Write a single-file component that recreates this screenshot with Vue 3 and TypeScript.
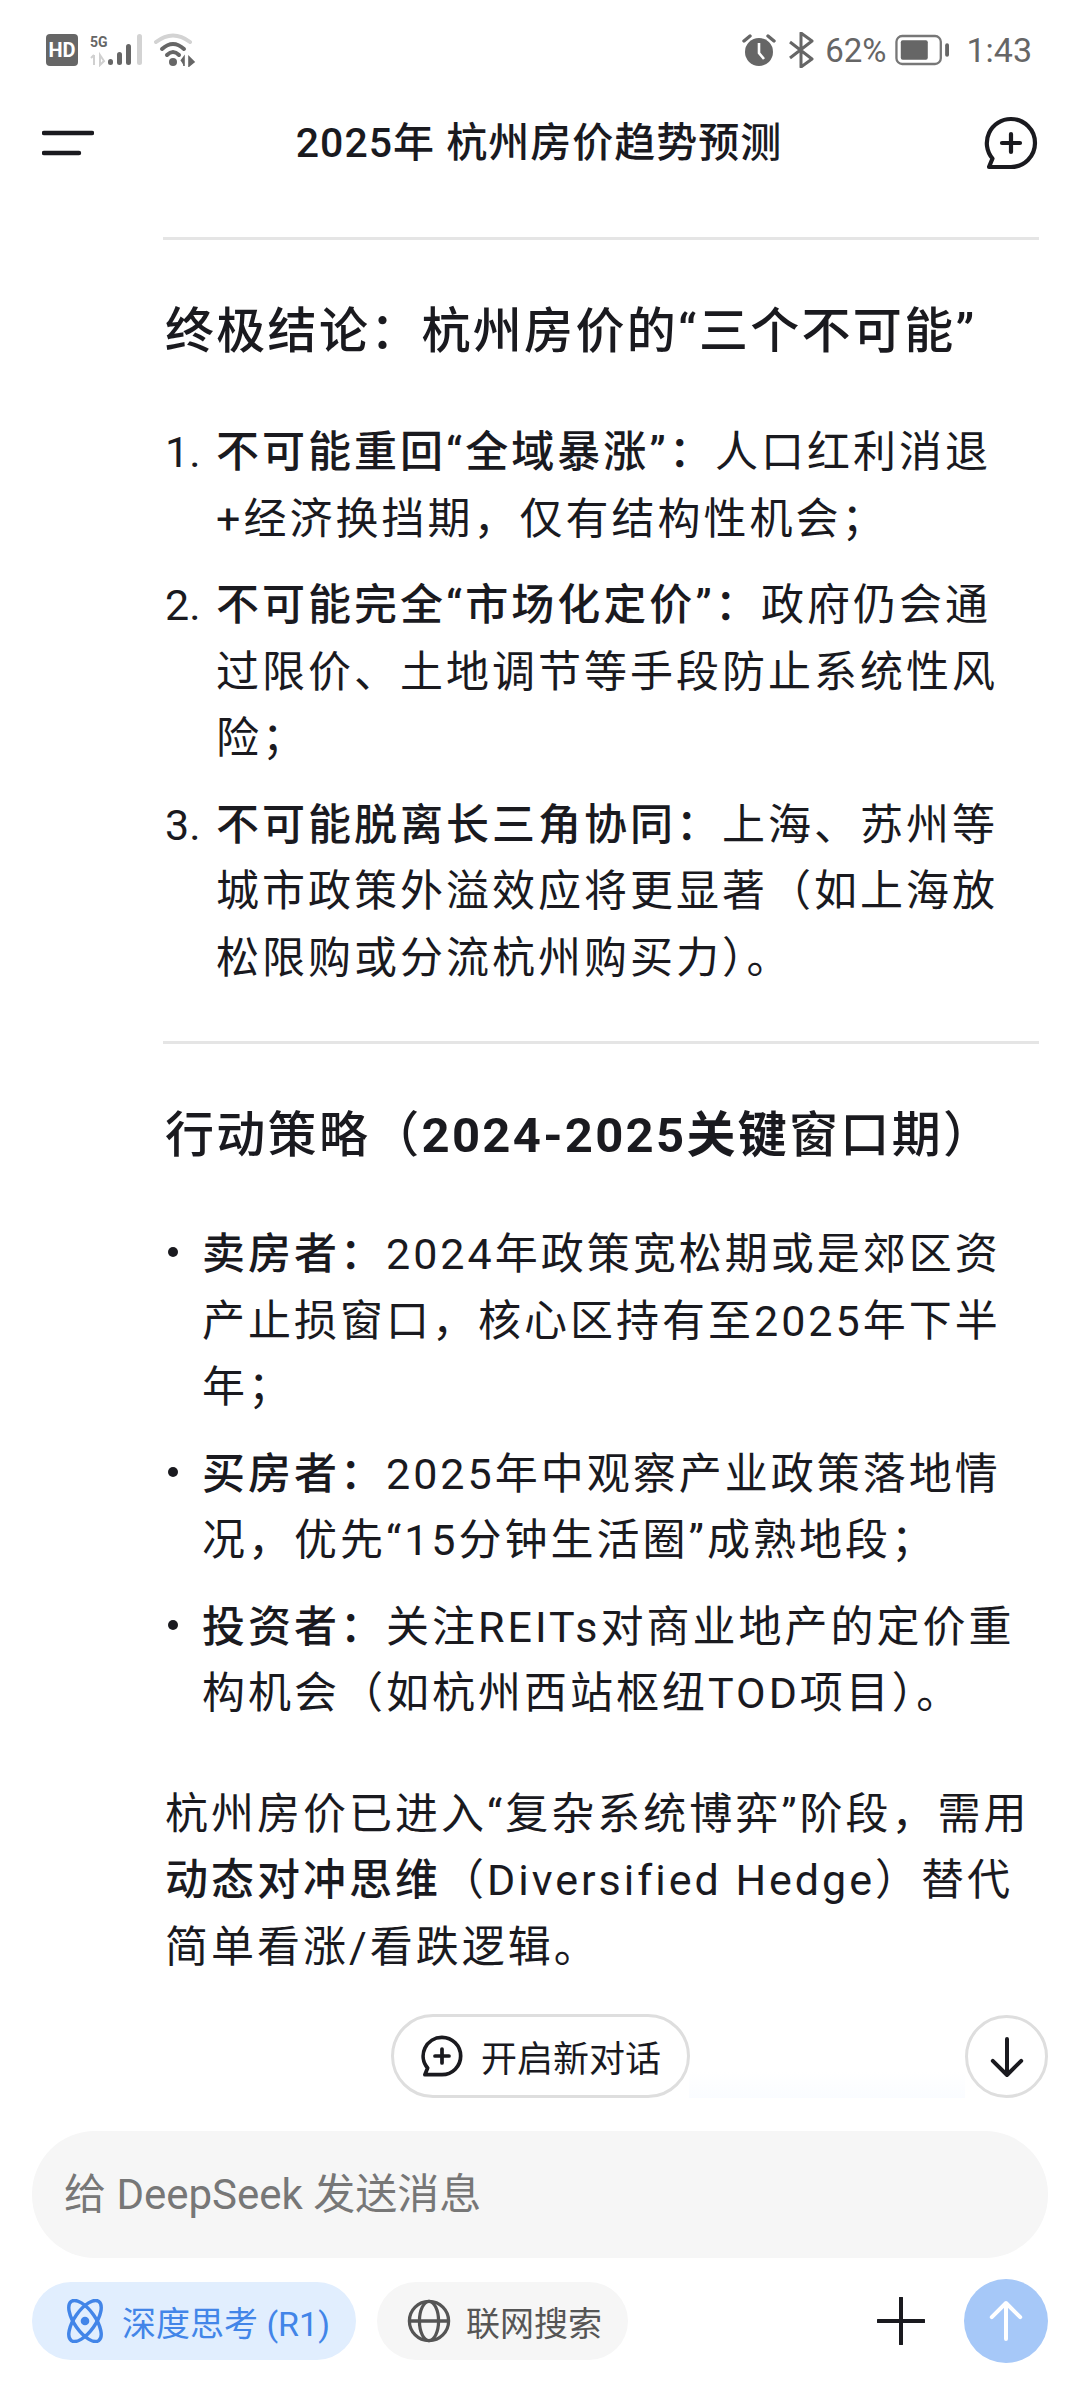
<script setup lang="ts">
interface Part {
  text: string
  bold?: boolean
}

const numbered: Part[][] = [
  [{ text: '不可能重回“全域暴涨”：', bold: true }, { text: '人口红利消退\n+经济换挡期，仅有结构性机会；' }],
  [{ text: '不可能完全“市场化定价”：', bold: true }, { text: '政府仍会通过限价、土地调节等手段防止系统性风险；' }],
  [{ text: '不可能脱离长三角协同：', bold: true }, { text: '上海、苏州等城市政策外溢效应将更显著（如上海放松限购或分流杭州购买力）。' }],
]

const bullets: Part[][] = [
  [{ text: '卖房者：', bold: true }, { text: '2024年政策宽松期或是郊区资产止损窗口，核心区持有至2025年下半年；' }],
  [{ text: '买房者：', bold: true }, { text: '2025年中观察产业政策落地情况，优先“15分钟生活圈”成熟地段；' }],
  [{ text: '投资者：', bold: true }, { text: '关注REITs对商业地产的定价重构机会（如杭州西站枢纽TOD项目）。' }],
]
</script>

<template>
  <div class="phone">
    <div class="status-bar">
      <div class="status-left">
        <span class="hd">HD</span>
        <svg class="signal" width="56" height="34" viewBox="0 0 56 34">
          <text x="0" y="14" class="net">5G</text>
          <path d="M4 22v10M1 25l3-3M10 22v10l4-4z" stroke="#d0d0d0" stroke-width="2" fill="none" />
          <g fill="#666">
            <rect x="18" y="26" width="5" height="6" rx="2.5" />
            <rect x="27" y="19" width="5" height="13" rx="2.5" />
            <rect x="36" y="11" width="5" height="21" rx="2.5" />
          </g>
          <rect x="47" y="1" width="5" height="31" rx="2.5" fill="#d3d3d3" />
        </svg>
        <svg class="wifi" width="42" height="34" viewBox="0 0 42 34">
          <path d="M2 9Q19 -4 36 9" stroke="#d3d3d3" stroke-width="4" fill="none" stroke-linecap="round" />
          <path d="M8 16Q19 6 30 16M13 22Q19 16 25 22" stroke="#666" stroke-width="4" fill="none" stroke-linecap="round" />
          <circle cx="19" cy="29" r="4" fill="#666" />
          <path d="M30 33v-9l-3 4M35 24v9l5-4z" stroke="#666" stroke-width="1.6" fill="#666" />
        </svg>
      </div>
      <div class="status-right">
        <svg class="alarm" width="34" height="34" viewBox="0 0 34 34">
          <circle cx="17" cy="19" r="14" fill="#666" />
          <path d="M17 10v10l5 6" stroke="#fff" stroke-width="2.6" fill="none" />
          <path d="M2 8l6-5M32 8l-6-5" stroke="#666" stroke-width="3.4" stroke-linecap="round" />
        </svg>
        <svg class="bt" width="28" height="36" viewBox="0 0 28 36">
          <path d="M3 10l22 17-11 8V1l11 8L3 26" stroke="#666" stroke-width="3" fill="none" stroke-linejoin="round" />
        </svg>
        <span class="pct">62%</span>
        <svg class="battery" width="54" height="32" viewBox="0 0 56 32">
          <rect x="1.5" y="1.5" width="46" height="29" rx="6" fill="none" stroke="#777" stroke-width="2.4" />
          <rect x="6" y="6" width="28" height="20" rx="2" fill="#666" />
          <rect x="52" y="9" width="4" height="14" rx="2" fill="#666" />
        </svg>
        <span class="time">1:43</span>
      </div>
    </div>

    <header class="top-bar">
      <svg width="52" height="26" viewBox="0 0 52 26">
        <path d="M2 3h48M2 23h35" stroke="#1a1a1f" stroke-width="4.4" stroke-linecap="round" />
      </svg>
      <h1 class="chat-title">2025年 杭州房价趋势预测</h1>
      <svg width="54" height="54" viewBox="0 0 54 54">
        <path d="M27 3a24 24 0 1 1 0 48H5l3.500-8.500A24 24 0 0 1 27 3z" fill="none" stroke="#1a1a1f" stroke-width="4.200" stroke-linejoin="round" />
        <path d="M27 18v18M18 27h18" stroke="#1a1a1f" stroke-width="4.200" stroke-linecap="round" />
      </svg>
    </header>

    <main class="chat-body">
      <hr class="rule" />
      <h2 class="section-title">终极结论：杭州房价的“三个不可能”</h2>
      <ol class="num-list">
        <li v-for="(item, i) in numbered" :key="i" class="num-item">
          <span class="marker">{{ i + 1 }}.</span>
          <p class="item-text">
            <template v-for="(part, j) in item" :key="j">
              <strong v-if="part.bold">{{ part.text }}</strong>
              <template v-else>{{ part.text }}</template>
            </template>
          </p>
        </li>
      </ol>
      <hr class="rule second" />
      <h2 class="section-title">行动策略（<b class="heavy">2024-2025关键</b>窗口期）</h2>
      <ul class="bullet-list">
        <li v-for="(item, i) in bullets" :key="i" class="bullet-item">
          <span class="dot"></span>
          <p class="item-text">
            <template v-for="(part, j) in item" :key="j">
              <strong v-if="part.bold">{{ part.text }}</strong>
              <template v-else>{{ part.text }}</template>
            </template>
          </p>
        </li>
      </ul>
      <p class="summary">杭州房价已进入“复杂系统博弈”阶段，需用<strong>动态对冲思维</strong>（Diversified Hedge）替代简单看涨/看跌逻辑。</p>
    </main>

    <div class="fade"></div>
    <button class="new-chat">
      <svg width="42" height="42" viewBox="0 0 54 54">
        <path d="M27 3a24 24 0 1 1 0 48H5l3.500-8.500A24 24 0 0 1 27 3z" fill="none" stroke="#1a1a1f" stroke-width="4.800" stroke-linejoin="round" />
        <path d="M27 18v18M18 27h18" stroke="#1a1a1f" stroke-width="4.800" stroke-linecap="round" />
      </svg>
      开启新对话
    </button>
    <button class="scroll-down">
      <svg width="36" height="42" viewBox="0 0 38 44">
        <path d="M19 3v38M4 26l15 15 15-15" fill="none" stroke="#1a1a1f" stroke-width="4.200" stroke-linecap="round" stroke-linejoin="round" />
      </svg>
    </button>

    <div class="composer">
      <div class="input-box">给 DeepSeek 发送消息</div>
      <div class="tools">
        <button class="chip active">
          <svg width="44" height="44" viewBox="0 0 46 46">
            <g fill="none" stroke="#4285e8" stroke-width="3.600">
              <ellipse cx="23" cy="23" rx="11" ry="25" transform="rotate(-35 23 23)" />
              <ellipse cx="23" cy="23" rx="11" ry="25" transform="rotate(35 23 23)" />
            </g>
            <circle cx="23" cy="23" r="4.500" fill="#4285e8" />
          </svg>
          深度思考 (R1)
        </button>
        <button class="chip">
          <svg width="44" height="44" viewBox="0 0 46 46">
            <g fill="none" stroke="#555" stroke-width="3.400">
              <circle cx="23" cy="23" r="20.500" />
              <ellipse cx="23" cy="23" rx="10" ry="20.500" />
              <path d="M3 23h40" />
            </g>
          </svg>
          联网搜索
        </button>
        <svg class="plus" width="48" height="48" viewBox="0 0 48 48">
          <path d="M24 1v46M1 24h46" stroke="#1a1a1f" stroke-width="4" stroke-linecap="round" />
        </svg>
        <button class="send">
          <svg width="36" height="42" viewBox="0 0 38 44">
            <path d="M19 41V3M4 18L19 3l15 15" fill="none" stroke="#fff" stroke-width="4.200" stroke-linecap="round" stroke-linejoin="round" />
          </svg>
        </button>
      </div>
    </div>
  </div>
</template>

<style>
html, body {
  margin: 0;
  background: #fff;
}
</style>

<style scoped>
.phone {
  position: relative;
  width: 1080px;
  height: 2400px;
  overflow: hidden;
  background: #fff;
  color: #1a1a1f;
  font-family: Roboto, "Noto Sans CJK SC", sans-serif;
  display: flex;
  flex-direction: column;
}

.status-bar {
  height: 98px;
  padding: 32px 48px 0 46px;
  box-sizing: border-box;
  display: flex;
  justify-content: space-between;
  align-items: flex-start;
  color: #666;
}

.status-left,
.status-right {
  display: flex;
  align-items: center;
  height: 36px;
}

.hd {
  width: 32px;
  height: 32px;
  border-radius: 4px;
  background: #666;
  color: #fff;
  font-size: 20px;
  font-weight: 700;
  line-height: 32px;
  text-align: center;
  margin-right: 12px;
}

.signal {
  margin-right: 8px;
}

.net {
  font-size: 14px;
  font-weight: 700;
  fill: #666;
}

.alarm {
  margin-right: 11px;
}

.bt {
  margin-right: 10px;
}

.pct {
  font-size: 33px;
  margin-right: 9px;
}

.battery {
  margin-right: 17px;
}

.time {
  font-size: 34px;
}

.top-bar {
  height: 90px;
  padding: 0 42px 0 42px;
  display: flex;
  align-items: center;
  justify-content: space-between;
}

.chat-title {
  margin: 0;
  font-size: 41px;
  font-weight: 500;
  letter-spacing: 1px;
  line-height: 60px;
}

.chat-body {
  padding: 49px 0 0 165px;
  width: 868px;
  box-sizing: content-box;
}

.rule {
  margin: 0 6px 0 -2px;
  border: none;
  height: 3px;
  background: #e5e5e5;
  width: 876px;
}

.rule.second {
  margin-top: 50px;
}

.section-title {
  margin: 57px 0 0;
  font-size: 49px;
  font-weight: 500;
  line-height: 70px;
  letter-spacing: 2.3px;
  white-space: nowrap;
}

.heavy {
  font-weight: 700;
}

.num-list,
.bullet-list {
  list-style: none;
  margin: 0;
  padding: 0;
}

.num-list {
  margin-top: 52px;
}

.bullet-list {
  margin-top: 50px;
}

.num-item,
.bullet-item {
  display: flex;
  margin-bottom: 20px;
  position: relative;
}

.marker {
  width: 51px;
  flex: none;
  font-size: 43px;
  line-height: 66.5px;
}

.dot {
  flex: none;
  width: 10px;
  height: 10px;
  border-radius: 50%;
  background: #1a1a1f;
  margin: 26px 24px 0 3px;
}

.item-text {
  margin: 0;
  flex: 1;
  font-size: 43px;
  line-height: 66.5px;
  letter-spacing: 3px;
  white-space: pre-line;
}

.item-text strong,
.summary strong {
  font-weight: 500;
}

.summary {
  margin: 54px 0 0;
  font-size: 43px;
  line-height: 66.5px;
  letter-spacing: 3px;
}

.fade {
  position: absolute;
  left: 689px;
  top: 2072px;
  width: 276px;
  height: 26px;
  background: linear-gradient(#fff, #fafcff);
}

.new-chat {
  position: absolute;
  left: 391px;
  top: 2014px;
  width: 299px;
  height: 84px;
  border: 3px solid #dedede;
  border-radius: 42px;
  background: #fff;
  color: #1a1a1f;
  font: 400 36px Roboto, "Noto Sans CJK SC", sans-serif;
  display: flex;
  align-items: center;
  gap: 18px;
  padding: 0 0 0 27px;
}

.scroll-down {
  position: absolute;
  left: 965px;
  top: 2015px;
  width: 83px;
  height: 83px;
  border: 3px solid #dedede;
  border-radius: 50%;
  background: #fff;
  display: flex;
  align-items: center;
  justify-content: center;
  padding: 0;
}

.composer {
  position: absolute;
  left: 32px;
  right: 32px;
  top: 2131px;
  display: flex;
  flex-direction: column;
  gap: 21px;
}

.input-box {
  height: 127px;
  border-radius: 63px;
  background: #f6f6f6;
  color: #777;
  font-size: 42px;
  line-height: 127px;
  padding-left: 32px;
}

.tools {
  display: flex;
  align-items: center;
  gap: 21px;
}

.chip {
  height: 78px;
  border: none;
  border-radius: 39px;
  background: #f6f6f6;
  color: #555;
  font: 400 34px Roboto, "Noto Sans CJK SC", sans-serif;
  display: flex;
  align-items: center;
  gap: 15px;
  padding: 0 26px 0 30px;
}

.chip.active {
  background: #e1eefe;
  color: #4285e8;
  padding: 0 26px 0 31px;
}

.plus {
  margin-left: auto;
  margin-right: 18px;
}

.send {
  width: 84px;
  height: 84px;
  border: none;
  border-radius: 50%;
  background: #a6c8f8;
  display: flex;
  align-items: center;
  justify-content: center;
  padding: 0;
}
</style>
